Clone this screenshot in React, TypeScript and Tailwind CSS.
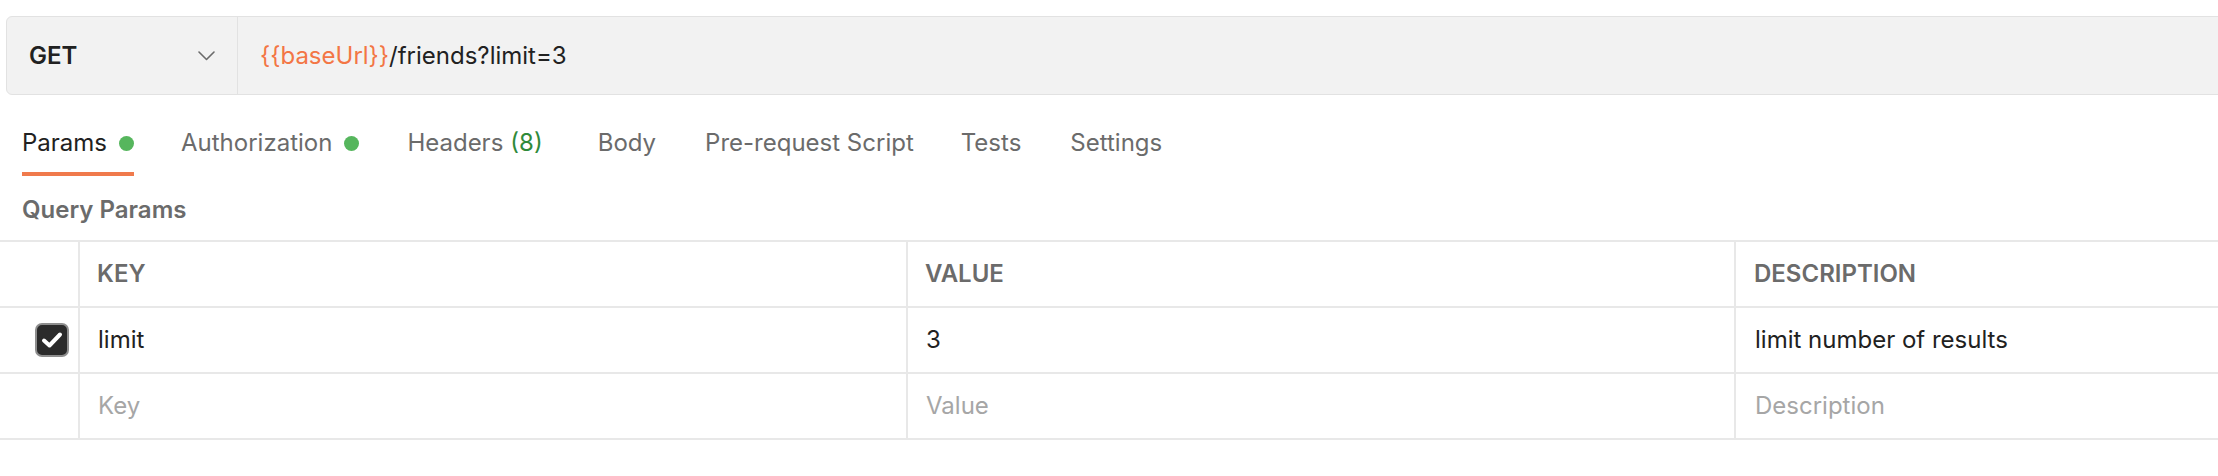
import React from "react";

const tabs = [
  { label: "Params", dot: true, active: true, ml: "ml-0" },
  { label: "Authorization", dot: true, ml: "ml-[47px]" },
  { label: "Headers", count: "(8)", ml: "ml-[48px]" },
  { label: "Body", ml: "ml-[55px]" },
  { label: "Pre-request Script", ml: "ml-[49px]" },
  { label: "Tests", ml: "ml-[47px]" },
  { label: "Settings", ml: "ml-[49px]" },
];

function Checkbox() {
  return (
    <div className="w-[34px] h-[34px] rounded-[7px] bg-[#2b2b2b] border-2 border-[#8e8e8e] flex items-center justify-center">
      <svg width="22" height="18" viewBox="0 0 22 18" fill="none">
        <path d="M3 9.5 L8.5 14.5 L19 3.5" stroke="#ffffff" strokeWidth="4" strokeLinecap="round" strokeLinejoin="round" />
      </svg>
    </div>
  );
}

export default function App() {
  return (
    <div className="w-[2218px] h-[476px] bg-white overflow-hidden font-['Inter','Liberation_Sans',sans-serif] text-[#212121]">
      {/* URL bar */}
      <div className="pt-[16px] pl-[6px]">
        <div className="w-[2240px] h-[79px] flex bg-[#f2f2f2] border border-[#e2e2e2] rounded-l-[6px]">
          <div className="w-[231px] shrink-0 flex items-center justify-between pl-[22px] pr-[22px] border-r border-[#e2e2e2]">
            <span className="text-[24px] font-semibold leading-[28px] text-[#212121]">GET</span>
            <svg width="17" height="10" viewBox="0 0 17 10" fill="none">
              <path d="M1 1 L8.5 8.5 L16 1" stroke="#6b6b6b" strokeWidth="1.6" strokeLinecap="round" strokeLinejoin="round" />
            </svg>
          </div>
          <div className="flex items-center pl-[22px] text-[24px] leading-[28px]">
            <span className="text-[#f37645]">{"{{baseUrl}}"}</span>
            <span className="text-[#212121]">/friends?limit=3</span>
          </div>
        </div>
      </div>

      {/* Tabs */}
      <div className="flex pl-[22px]">
        {tabs.map((t) => (
          <div
            key={t.label}
            className={
              "flex items-center pt-[34px] pb-[15px] border-b-[4px] " +
              t.ml +
              " " +
              (t.active ? "border-[#f07a4c]" : "border-transparent")
            }
          >
            <span
              className={
                "text-[24px] leading-[28px] " + (t.active ? "text-[#212121]" : "text-[#6b6b6b]")
              }
            >
              {t.label}
            </span>
            {t.count && <span className="ml-[7px] text-[24px] leading-[28px] text-[#2f8a3a]">{t.count}</span>}
            {t.dot && <span className="ml-[12px] w-[15px] h-[15px] rounded-full bg-[#56b65d]" />}
          </div>
        ))}
      </div>

      {/* Query Params */}
      <div className="pl-[22px] mt-[20px] text-[24px] leading-[28px] font-semibold text-[#6b6b6b]">
        Query Params
      </div>

      {/* Table */}
      <div className="mt-[16px] border-t-2 border-[#e8e8e8] w-[2218px]">
        {/* Header */}
        <div className="flex h-[66px] border-b-2 border-[#e8e8e8]">
          <div className="w-[80px] shrink-0 border-r-2 border-[#e8e8e8]" />
          <div className="w-[828px] shrink-0 border-r-2 border-[#e8e8e8] flex items-center pl-[17px] text-[24px] font-semibold text-[#6b6b6b]">
            KEY
          </div>
          <div className="w-[828px] shrink-0 border-r-2 border-[#e8e8e8] flex items-center pl-[17px] text-[24px] font-semibold text-[#6b6b6b]">
            VALUE
          </div>
          <div className="flex-1 flex items-center pl-[18px] text-[24px] font-semibold text-[#6b6b6b]">
            DESCRIPTION
          </div>
        </div>
        {/* Row 1 */}
        <div className="flex h-[66px] border-b-2 border-[#e8e8e8]">
          <div className="w-[80px] shrink-0 border-r-2 border-[#e8e8e8] flex items-center justify-end pr-[9px]">
            <Checkbox />
          </div>
          <div className="w-[828px] shrink-0 border-r-2 border-[#e8e8e8] flex items-center pl-[18px] text-[24px] text-[#212121]">
            limit
          </div>
          <div className="w-[828px] shrink-0 border-r-2 border-[#e8e8e8] flex items-center pl-[18px] text-[24px] text-[#212121]">
            3
          </div>
          <div className="flex-1 flex items-center pl-[19px] text-[24px] text-[#212121]">
            limit number of results
          </div>
        </div>
        {/* Row 2 */}
        <div className="flex h-[66px] border-b-2 border-[#e8e8e8]">
          <div className="w-[80px] shrink-0 border-r-2 border-[#e8e8e8]" />
          <div className="w-[828px] shrink-0 border-r-2 border-[#e8e8e8] flex items-center pl-[18px] text-[24px] text-[#a6a6a6]">
            Key
          </div>
          <div className="w-[828px] shrink-0 border-r-2 border-[#e8e8e8] flex items-center pl-[18px] text-[24px] text-[#a6a6a6]">
            Value
          </div>
          <div className="flex-1 flex items-center pl-[19px] text-[24px] text-[#a6a6a6]">
            Description
          </div>
        </div>
      </div>
    </div>
  );
}
